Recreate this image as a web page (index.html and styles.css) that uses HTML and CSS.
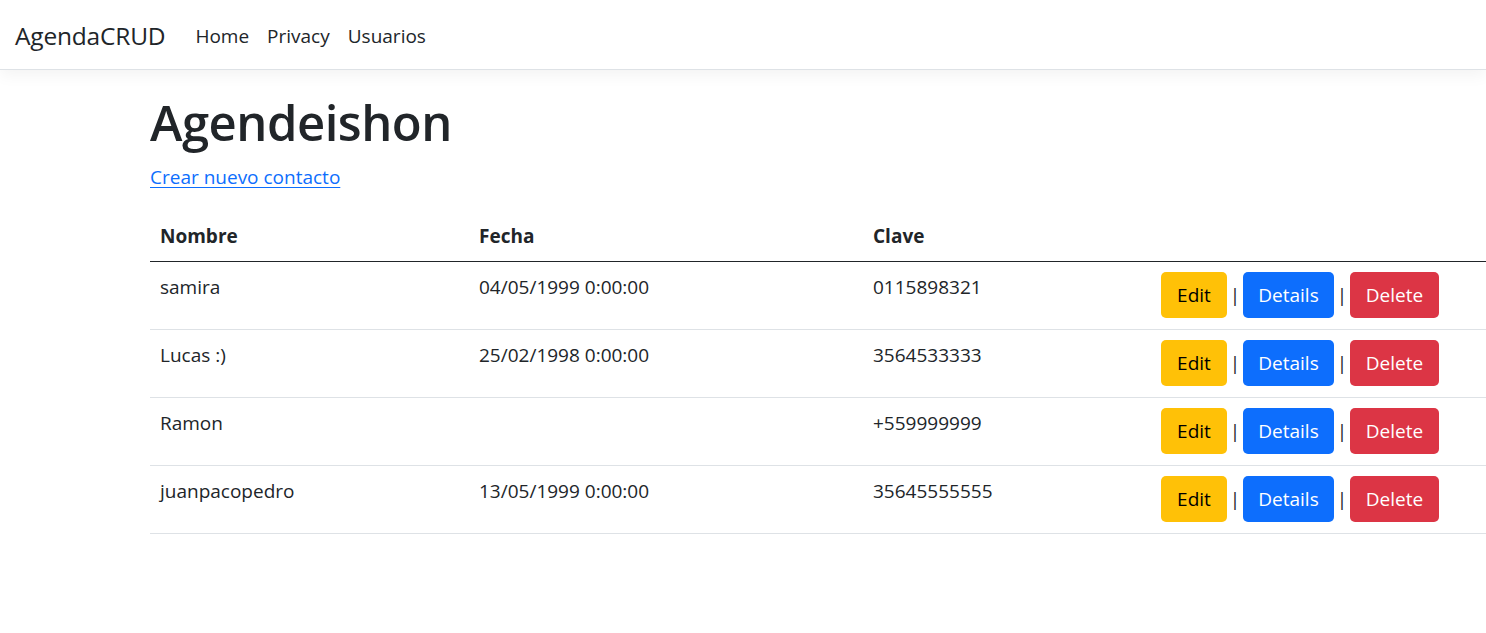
FILE: index.html
```html
<!DOCTYPE html>
<html lang="es">
<head>
<meta charset="utf-8">
<title>Agendeishon - AgendaCRUD</title>
<link rel="stylesheet" href="styles.css">
</head>
<body>
<header class="navbar">
  <a class="brand" href="#">AgendaCRUD</a>
  <nav class="nav">
    <a class="nav-link" href="#">Home</a>
    <a class="nav-link" href="#">Privacy</a>
    <a class="nav-link" href="#">Usuarios</a>
  </nav>
</header>
<main class="main">
  <h1 class="title">Agendeishon</h1>
  <p class="create"><a href="#">Crear nuevo contacto</a></p>
  <table class="table">
    <thead>
      <tr>
        <th class="c-name">Nombre</th>
        <th class="c-date">Fecha</th>
        <th class="c-key">Clave</th>
        <th class="c-act"></th>
      </tr>
    </thead>
    <tbody>
      <tr>
        <td>samira</td>
        <td>04/05/1999 0:00:00</td>
        <td>0115898321</td>
        <td class="actions"><div class="btns"><a class="btn btn-edit" href="#">Edit</a><span class="sep">|</span><a class="btn btn-details" href="#">Details</a><span class="sep">|</span><a class="btn btn-delete" href="#">Delete</a></div></td>
      </tr>
      <tr>
        <td>Lucas :)</td>
        <td>25/02/1998 0:00:00</td>
        <td>3564533333</td>
        <td class="actions"><div class="btns"><a class="btn btn-edit" href="#">Edit</a><span class="sep">|</span><a class="btn btn-details" href="#">Details</a><span class="sep">|</span><a class="btn btn-delete" href="#">Delete</a></div></td>
      </tr>
      <tr>
        <td>Ramon</td>
        <td></td>
        <td>+559999999</td>
        <td class="actions"><div class="btns"><a class="btn btn-edit" href="#">Edit</a><span class="sep">|</span><a class="btn btn-details" href="#">Details</a><span class="sep">|</span><a class="btn btn-delete" href="#">Delete</a></div></td>
      </tr>
      <tr>
        <td>juanpacopedro</td>
        <td>13/05/1999 0:00:00</td>
        <td>35645555555</td>
        <td class="actions"><div class="btns"><a class="btn btn-edit" href="#">Edit</a><span class="sep">|</span><a class="btn btn-details" href="#">Details</a><span class="sep">|</span><a class="btn btn-delete" href="#">Delete</a></div></td>
      </tr>
    </tbody>
  </table>
</main>
</body>
</html>
```

FILE: styles.css
```css
html, body {
  margin: 0;
  padding: 0;
  background: #fff;
  overflow: hidden;
}
body {
  font-family: "Open Sans", "Noto Sans", "Liberation Sans", sans-serif;
  color: #212529;
  font-size: 19px;
  line-height: 30px;
}
a { color: inherit; text-decoration: none; }

.navbar {
  display: flex;
  align-items: center;
  height: 70px;
  box-sizing: border-box;
  border-bottom: 1px solid #dee2e6;
  box-shadow: 0 5px 15px rgba(0, 0, 0, 0.05);
  padding: 0 15px 0 15px;
  background: #fff;
}
.brand {
  font-size: 24.5px;
  color: #212529;
  margin-right: 21px;
  letter-spacing: -0.2px;
  position: relative;
  top: 1px;
}
.nav {
  display: flex;
  position: relative;
  top: 1px;
}
.nav-link {
  font-size: 19px;
  color: #212529;
  padding: 0 9px;
}

.main {
  padding-left: 150px;
}
.title {
  font-size: 49px;
  font-weight: 600;
  line-height: 60px;
  margin: 22px 0 10px;
  letter-spacing: -0.5px;
}
.create {
  margin: 0 0 19px;
  font-size: 19px;
}
.create a {
  color: #0d6efd;
  text-decoration: underline;
  text-underline-offset: 3px;
}

.table {
  border-collapse: collapse;
  width: 1400px;
  table-layout: fixed;
}
.table th, .table td {
  text-align: left;
  padding: 10px 10px;
  vertical-align: top;
  border-bottom: 1px solid #dee2e6;
}
.table th {
  font-weight: 700;
  border-bottom: 1px solid #212529;
  height: 30px;
}
.table td { height: 47px; }
.c-name { width: 299px; }
.c-date { width: 374px; }
.c-key { width: 268px; }

.btns {
  display: flex;
  align-items: center;
}
.btn {
  display: inline-flex;
  align-items: center;
  justify-content: center;
  height: 46px;
  border-radius: 5px;
  font-size: 19px;
  box-sizing: border-box;
}
.btn-edit { width: 66px; background: #ffc107; color: #000; }
.btn-details { width: 91px; background: #0d6efd; color: #fff; }
.btn-delete { width: 89px; background: #dc3545; color: #fff; }
.sep {
  width: 16px;
  text-align: center;
  color: #212529;
  font-size: 19px;
}
```
